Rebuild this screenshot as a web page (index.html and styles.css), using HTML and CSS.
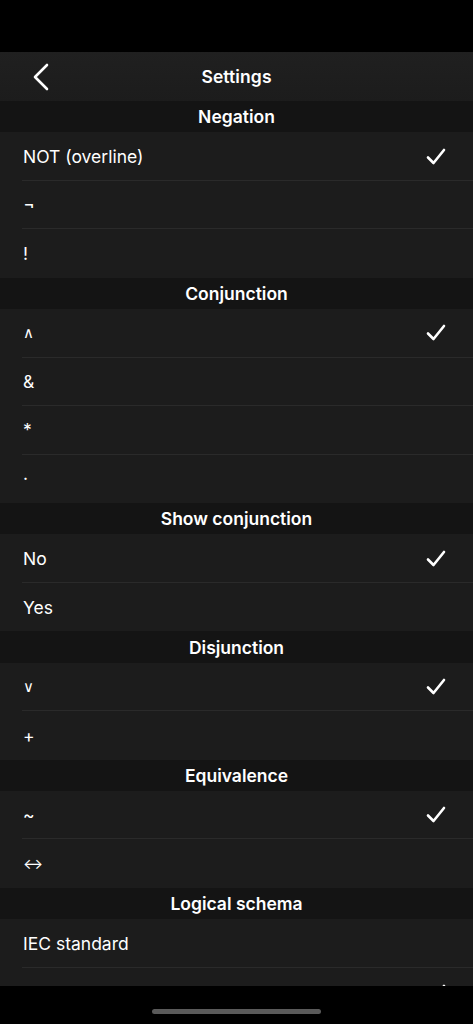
FILE: index.html
```html
<!DOCTYPE html>
<html>
<head>
<meta charset="utf-8">
<link rel="stylesheet" href="styles.css">
</head>
<body>
<div class="screen">
  <div class="status"></div>
  <div class="nav">
    <svg class="back" width="16" height="28" viewBox="0 0 16 28"><path d="M14 2 L2 14 L14 26" fill="none" stroke="#fff" stroke-width="2.6" stroke-linecap="round" stroke-linejoin="round"/></svg>
    <div class="title">Settings</div>
  </div>
  <div class="content">
    <div class="section">Negation</div>
    <div class="row"><span>NOT (overline)</span><svg class="check" viewBox="0 0 20 17"><path d="M2 9.5 L7.5 15 L18 2" fill="none" stroke="#fff" stroke-width="2.6" stroke-linecap="round" stroke-linejoin="round"/></svg></div>
    <div class="row"><span class="sym big">¬</span></div>
    <div class="row last"><span>!</span></div>

    <div class="section">Conjunction</div>
    <div class="row"><span class="sym">∧</span><svg class="check" viewBox="0 0 20 17"><path d="M2 9.5 L7.5 15 L18 2" fill="none" stroke="#fff" stroke-width="2.6" stroke-linecap="round" stroke-linejoin="round"/></svg></div>
    <div class="row"><span>&amp;</span></div>
    <div class="row"><span>*</span></div>
    <div class="row last"><span>·</span></div>

    <div class="section">Show conjunction</div>
    <div class="row"><span>No</span><svg class="check" viewBox="0 0 20 17"><path d="M2 9.5 L7.5 15 L18 2" fill="none" stroke="#fff" stroke-width="2.6" stroke-linecap="round" stroke-linejoin="round"/></svg></div>
    <div class="row last"><span>Yes</span></div>

    <div class="section">Disjunction</div>
    <div class="row"><span class="sym">∨</span><svg class="check" viewBox="0 0 20 17"><path d="M2 9.5 L7.5 15 L18 2" fill="none" stroke="#fff" stroke-width="2.6" stroke-linecap="round" stroke-linejoin="round"/></svg></div>
    <div class="row last"><span>+</span></div>

    <div class="section">Equivalence</div>
    <div class="row"><span>~</span><svg class="check" viewBox="0 0 20 17"><path d="M2 9.5 L7.5 15 L18 2" fill="none" stroke="#fff" stroke-width="2.6" stroke-linecap="round" stroke-linejoin="round"/></svg></div>
    <div class="row last"><span class="arrow">↔</span></div>

    <div class="section">Logical schema</div>
    <div class="row"><span>IEC standard</span></div>
    <div class="row last"><span>ANSI standard</span><svg class="check" viewBox="0 0 20 17"><path d="M2 9.5 L7.5 15 L18 2" fill="none" stroke="#fff" stroke-width="2.6" stroke-linecap="round" stroke-linejoin="round"/></svg></div>
  </div>
  <div class="homebar"><div class="indicator"></div></div>
</div>
</body>
</html>
```

FILE: styles.css
```css
* { box-sizing: border-box; }
html, body { margin: 0; padding: 0; background: #000; }
body { font-family: Inter, "Noto Sans", "Liberation Sans", sans-serif; color: #fff; }
.screen { width: 473px; height: 1024px; display: flex; flex-direction: column; overflow: hidden; background: #000; }
.status { height: 52px; flex: none; background: #000; }
.nav { height: 49px; flex: none; background: linear-gradient(#202020, #1c1c1c); display: flex; align-items: center; justify-content: center; position: relative; }
.back { position: absolute; left: 33px; top: 11px; }
.title { font-size: 17.5px; font-weight: 600; letter-spacing: 0.1px; }
.content { flex: 1; overflow: hidden; background: #1c1c1c; }
.section { height: 31.3px; background: #141414; display: flex; align-items: center; justify-content: center; font-size: 17.5px; font-weight: 600; }
.row { height: 48.5px; margin-left: 22px; padding-right: 27px; display: flex; align-items: center; justify-content: space-between; font-size: 17.5px; border-bottom: 1px solid #2a2a2a; }
.row span { padding-left: 1px; }
.row .sym { font-weight: 300; font-size: 15px; }
.row .sym.big { font-size: 19px; font-weight: 400; }
.row .arrow { font-size: 15px; }
.row.last { border-bottom: none; }
.check { width: 20px; height: 17px; }
.homebar { height: 38px; flex: none; background: #000; display: flex; justify-content: center; padding-top: 23px; }
.indicator { width: 169px; height: 5px; border-radius: 3px; background: #5a5a5a; }
```
